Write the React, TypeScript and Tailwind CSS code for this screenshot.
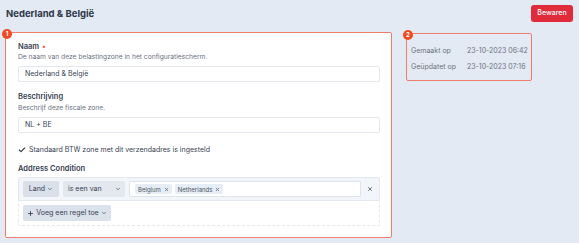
import { Check, ChevronDown, Plus, X } from 'lucide-react'

const font = { fontFamily: 'Inter, "Liberation Sans", sans-serif' }

function Badge({ n }: { n: number }) {
  return (
    <span className="absolute -left-[4px] -top-[4px] flex h-[10px] w-[10px] items-center justify-center rounded-full bg-[#ef4a24] text-[6px] font-bold leading-none text-white">
      {n}
    </span>
  )
}

function Tag({ label }: { label: string }) {
  return (
    <span className="flex h-[10px] items-center gap-[3px] rounded-[2px] bg-[#e7edf5] px-[3px] text-[6px] text-[#4b5563]">
      {label}
      <X size={5} strokeWidth={4} className="text-[#6b7280]" />
    </span>
  )
}

export default function App() {
  return (
    <div className="h-[243px] w-[579px] overflow-hidden bg-[#e4eaf4] text-[#374151]" style={font}>
      {/* Header */}
      <div className="flex items-center justify-between pl-[6px] pr-[6px] pt-[5px]">
        <h1 className="text-[9.5px] font-bold leading-[17px] text-[#2d3748]">Nederland &amp; België</h1>
        <button className="h-[17px] w-[42px] rounded-[3px] bg-[#e02b3b] text-[7px] font-medium text-white">Bewaren</button>
      </div>

      <div className="flex items-start gap-[14px] pl-[5px] pt-[10px]">
        {/* Main form card */}
        <div className="relative w-[387px] rounded-[2px] border-[1.5px] border-[#f17d6c] bg-white pb-[11px] pl-[12px] pr-[11px] pt-[9px]">
          <Badge n={1} />

          <div className="flex items-center gap-[3px] text-[7.5px] font-semibold leading-[10px] text-[#374151]">
            Naam <span className="text-[#ef4444]">•</span>
          </div>
          <p className="text-[6.7px] leading-[10px] text-[#6b7280]">De naam van deze belastingzone in het configuratiescherm.</p>
          <div className="mt-[4px] flex h-[16px] items-center rounded-[2px] border border-[#e3e8ef] px-[6px] text-[7px] text-[#374151]">
            Nederland &amp; België
          </div>

          <div className="mt-[10px] text-[7.5px] font-semibold leading-[10px] text-[#374151]">Beschrijving</div>
          <p className="mt-[1px] text-[6.7px] leading-[10px] text-[#6b7280]">Beschrijf deze fiscale zone.</p>
          <div className="mt-[4px] flex h-[16px] items-center rounded-[2px] border border-[#e3e8ef] px-[6px] text-[7px] text-[#374151]">
            NL + BE
          </div>

          <label className="mt-[12px] flex h-[10px] items-center gap-[3px] text-[7px] text-[#374151]">
            <Check size={8} strokeWidth={3.5} className="text-[#374151]" />
            Standaard BTW zone met dit verzendadres is ingesteld
          </label>

          <div className="mt-[9px] text-[7.5px] font-semibold leading-[10px] text-[#374151]">Address Condition</div>

          {/* Condition builder */}
          <div className="mt-[3px]">
            <div className="flex h-[24px] items-center gap-[4px] rounded-t-[2px] border border-[#e3e8ef] bg-[#f2f5f9] pl-[4px] pr-[4px]">
              <div className="flex h-[16px] w-[36px] items-center justify-center gap-[2px] rounded-[2px] bg-[#d9e0e9] text-[7px] text-[#374151]">
                Land <ChevronDown size={6} strokeWidth={2.5} />
              </div>
              <div className="flex h-[16px] w-[62px] items-center justify-between rounded-[2px] bg-[#e3e8ef] pl-[5px] pr-[4px] text-[7px] text-[#374151]">
                is een van <ChevronDown size={6} strokeWidth={2.5} />
              </div>
              <div className="flex h-[16px] flex-1 items-center gap-[3px] rounded-[2px] border border-[#dde3ea] bg-white px-[5px]">
                <Tag label="Belgium" />
                <Tag label="Netherlands" />
              </div>
              <X size={6} strokeWidth={4} className="mx-[2px] text-[#6b7280]" />
            </div>
            <div className="flex h-[25px] items-center rounded-b-[2px] border border-t-0 border-dashed border-[#e3e8ef] pl-[4px]">
              <button className="flex h-[16px] w-[88px] items-center justify-center gap-[2px] rounded-[2px] bg-[#dce2eb] text-[7px] text-[#374151]">
                <Plus size={7} strokeWidth={3} /> Voeg een regel toe <ChevronDown size={6} strokeWidth={2.5} />
              </button>
            </div>
          </div>
        </div>

        {/* Meta card */}
        <div className="relative mt-[1px] w-[126px] rounded-[2px] border-[1.5px] border-[#f17d6c] pb-[5px] pl-[4px] pt-[9px] text-[7px] text-[#6b7280]">
          <Badge n={2} />
          <div className="flex h-[16px] items-center">
            <span className="w-[56px]">Gemaakt op</span>
            <span>23-10-2023 06:42</span>
          </div>
          <div className="flex h-[16px] items-center">
            <span className="w-[56px]">Geüpdatet op</span>
            <span>23-10-2023 07:16</span>
          </div>
        </div>
      </div>
    </div>
  )
}
